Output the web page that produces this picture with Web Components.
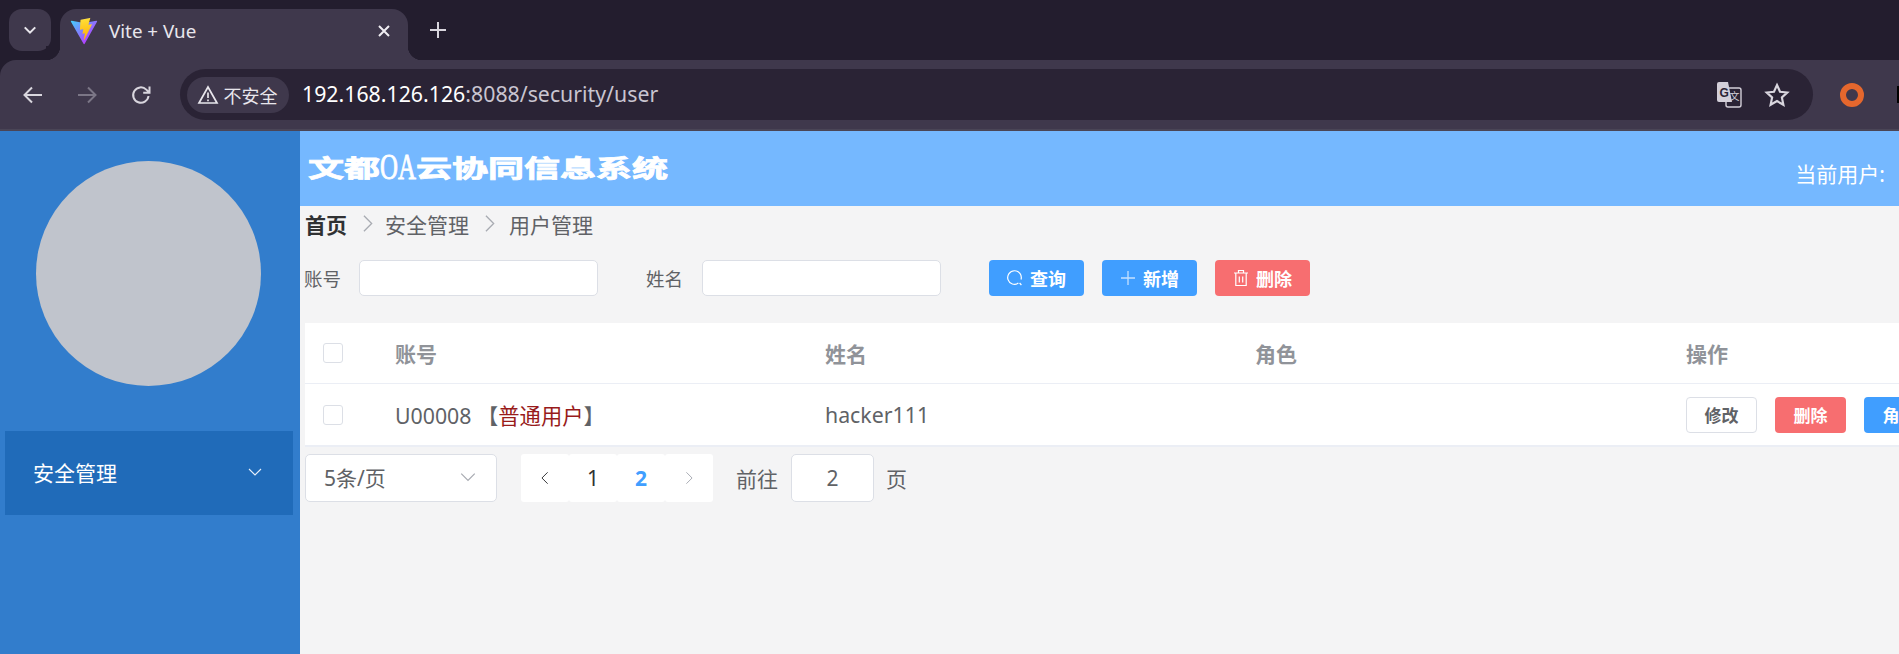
<!DOCTYPE html>
<html lang="zh">
<head>
<meta charset="utf-8">
<title>Vite + Vue</title>
<style>
/* Removes the default margin and padding on the page */
html, body { margin: 0; padding: 0; height: 654px; overflow: hidden; }
body {
    display: flex;
    flex-direction: column;
    font-family: "Noto Sans", "Noto Sans CJK SC", sans-serif;
    background: #f4f4f5;
}
</style>
</head>
<body>
<browser-frame></browser-frame>
<app-shell>
    <app-sidebar slot="side"></app-sidebar>
    <app-header></app-header>
    <bread-crumb></bread-crumb>
    <search-form></search-form>
    <user-table></user-table>
    <pager-bar></pager-bar>
</app-shell>

<script>
//! Small helper, every element clones its template into an open shadow root
function defineEl(name, html) {
    const tpl = document.createElement('template')
    tpl.innerHTML = html
    customElements.define(name, class extends HTMLElement {
        constructor() {
            super()
            this.attachShadow({ mode: 'open' })
            this.shadowRoot.appendChild(tpl.content.cloneNode(true))
        }
    })
}

const chevronDown = (s, c) => `<svg width="${s}" height="${s}" viewBox="0 0 16 16" fill="none" stroke="${c}" stroke-width="1.1"><path d="M2 5l6 6 6-6"/></svg>`
const chevronRight = (s, c) => `<svg width="${s}" height="${s}" viewBox="0 0 16 16" fill="none" stroke="${c}" stroke-width="1.1"><path d="M5 1.5l6.5 6.5L5 14.5"/></svg>`
const chevronLeft = (s, c) => `<svg width="${s}" height="${s}" viewBox="0 0 16 16" fill="none" stroke="${c}" stroke-width="1.1"><path d="M11 1.5L4.5 8l6.5 6.5"/></svg>`

//! BROWSER FRAME
defineEl('browser-frame', `
<style>
:host {
    display: block;
    flex: none;
    height: 131px;
    background: #231d2e;
    color: #e8e6ec;
}
.strip {
    height: 60px;
    display: flex;
    align-items: flex-start;
    padding: 9px 0 0 9px;
    box-sizing: border-box;
}
.switcher {
    width: 42px;
    height: 42px;
    border-radius: 13px;
    background: #3f384c;
    display: flex;
    align-items: center;
    justify-content: center;
}
.tab {
    position: relative;
    margin-left: 9px;
    width: 348px;
    height: 51px;
    background: #3f384c;
    border-radius: 16px 16px 0 0;
    display: flex;
    align-items: center;
    box-sizing: border-box;
    padding: 0 17px 8px 9px;
    font-size: 18.8px;
}
/* flared corners at the foot of the tab */
.tab::before, .tab::after {
    content: "";
    position: absolute;
    bottom: 0;
    width: 14px;
    height: 14px;
}
.tab::before { left: -14px; background: radial-gradient(circle at 0 0, #231d2e 14px, #3f384c 14.5px); }
.tab::after { right: -14px; background: radial-gradient(circle at 100% 0, #231d2e 14px, #3f384c 14.5px); }
.tab .name { flex: 1; margin-left: 10px; }
.plus { margin: 12px 0 0 21px; }
.toolbar {
    height: 69px;
    background: #3f384c;
    border-bottom: 2px solid #4a4556;
    border-radius: 16px 0 0 0;
    display: flex;
    align-items: center;
    padding-left: 21px;
}
.toolbar > * { flex: none; }
.nav { width: 24px; height: 24px; margin-right: 30px; }
.omni {
    margin-left: -3px;
    width: 1633px;
    height: 51px;
    border-radius: 26px;
    background: #2a2335;
    display: flex;
    align-items: center;
    box-sizing: border-box;
    padding-left: 7px;
}
.chip {
    width: 102px;
    height: 36px;
    border-radius: 18px;
    background: #3f384c;
    display: flex;
    align-items: center;
    justify-content: center;
    gap: 5px;
    padding-right: 2px;
    box-sizing: border-box;
    font-size: 18px;
    color: #e8e6ec;
}
.url { margin-left: 13px; padding-bottom: 3px; font-size: 21.3px; flex: 1; color: #c9c5d0; }
.url b { font-weight: 400; color: #fff; }
.omni-icons { display: flex; align-items: center; gap: 22px; padding-right: 23px; }
.ext { margin-left: 27px; }
.cut { margin-left: 33px; width: 8px; height: 17px; background: #000; }
</style>
<div class="strip">
    <div class="switcher">${chevronDown(14, '#e8e6ec').replace('stroke-width="1.1"', 'stroke-width="2.4"')}</div>
    <div class="tab">
        <svg width="30" height="30" viewBox="0 0 32 32">
            <defs>
                <linearGradient id="va" x1="2" y1="5" x2="22" y2="28" gradientUnits="userSpaceOnUse">
                    <stop offset="0" stop-color="#41D1FF"/><stop offset="1" stop-color="#BD34FE"/>
                </linearGradient>
                <linearGradient id="vb" x1="16" y1="2" x2="20" y2="27" gradientUnits="userSpaceOnUse">
                    <stop offset="0" stop-color="#FFEA83"/><stop offset=".08" stop-color="#FFDD35"/><stop offset="1" stop-color="#FFA800"/>
                </linearGradient>
            </defs>
            <path fill="url(#va)" d="M29.884 6.146 16.742 29.646a.714.714 0 0 1-1.244.005L2.096 6.148a.714.714 0 0 1 .746-1.057l13.156 2.352a.714.714 0 0 0 .253 0l12.881-2.348a.714.714 0 0 1 .752 1.05z"/>
            <path fill="url(#vb)" d="M22.264 2.007 12.54 3.912a.357.357 0 0 0-.288.33l-.598 10.104a.357.357 0 0 0 .437.369l2.707-.625a.357.357 0 0 1 .43.42l-.804 3.939a.357.357 0 0 0 .453.413l1.672-.508a.357.357 0 0 1 .453.414l-1.278 6.187c-.08.387.435.598.65.267l.143-.222 7.925-15.815a.357.357 0 0 0-.387-.51l-2.787.537a.357.357 0 0 1-.41-.45l1.818-6.306a.357.357 0 0 0-.412-.45z"/>
        </svg>
        <span class="name">Vite + Vue</span>
        <svg width="14" height="14" viewBox="0 0 14 14" stroke="#f0eef3" stroke-width="2"><path d="M2 2l10 10M12 2L2 12"/></svg>
    </div>
    <svg class="plus" width="18" height="18" viewBox="0 0 18 18" stroke="#d9d6de" stroke-width="2"><path d="M9 1v16M1 9h16"/></svg>
</div>
<div class="toolbar">
    <svg class="nav" viewBox="0 0 24 24" fill="none" stroke="#d9d6de" stroke-width="2"><path d="M21 12H4M11 4.5L3.5 12l7.5 7.5"/></svg>
    <svg class="nav" viewBox="0 0 24 24" fill="none" stroke="#7b7686" stroke-width="2"><path d="M3 12h17M13 4.5l7.5 7.5-7.5 7.5"/></svg>
    <svg class="nav" viewBox="0 0 24 24" fill="none" stroke="#d9d6de" stroke-width="2"><path d="M19.5 13a7.7 7.7 0 1 1-2.2-6.4L20 9.3M20.5 3.5v6.3h-6.3"/></svg>
    <div class="omni">
        <div class="chip">
            <svg width="22" height="20" viewBox="0 0 22 20" fill="none" stroke="#e8e6ec" stroke-width="1.7"><path d="M11 2L2 18h18zM11 7.5v5.5M11 14.500v1.700"/></svg>
            <span>不安全</span>
        </div>
        <div class="url"><b>192.168.126.126</b>:8088/security/user</div>
        <div class="omni-icons">
            <svg width="25" height="26" viewBox="0 0 25 26">
                <rect x="9" y="6" width="15" height="19" rx="2" fill="#2a2335" stroke="#d3cfd9" stroke-width="1.4"/>
                <path d="M2 0h9l4 20H2a2 2 0 0 1-2-2V2a2 2 0 0 1 2-2z" fill="#d3cfd9"/>
                <text x="2.5" y="15" font-size="12" font-weight="700" font-family="Liberation Sans" fill="#2a2335">G</text>
                <text x="12.5" y="18" font-size="10" font-family="Noto Sans CJK SC" fill="#d3cfd9">文</text>
            </svg>
            <svg width="26" height="26" viewBox="0 0 24 24" fill="none" stroke="#d9d6de" stroke-width="2"><path d="M12 2.8l2.8 6.2 6.7.7-5 4.600 1.400 6.700-5.900-3.400-5.900 3.400 1.400-6.700-5-4.600 6.700-.7z"/></svg>
        </div>
    </div>
    <svg class="ext" width="24" height="24" viewBox="0 0 24 24"><circle cx="12" cy="12" r="9" fill="none" stroke="#e5672d" stroke-width="6"/></svg>
    <div class="cut"></div>
</div>
`)

//! Page layout, sidebar on the left and the main column on the right
defineEl('app-shell', `
<style>
:host { display: flex; flex: 1; min-height: 0; }
main { flex: 1; min-width: 0; display: flex; flex-direction: column; overflow: hidden; }
</style>
<slot name="side"></slot>
<main><slot></slot></main>
`)

//! SIDEBAR
defineEl('app-sidebar', `
<style>
:host {
    display: block;
    flex: none;
    width: 300px;
    background: #327dcc;
    box-sizing: border-box;
    padding-top: 30px;
    color: #fff;
}
.avatar {
    width: 225px;
    height: 225px;
    border-radius: 50%;
    background: #c0c4cc;
    margin-left: 36px;
}
.menu {
    margin: 45px 7px 0 5px;
    height: 84px;
    box-sizing: border-box;
    background: #206bb9;
    display: flex;
    align-items: center;
    justify-content: space-between;
    padding: 0 30px 2px 28px;
    font-size: 21px;
}
</style>
<div class="avatar"></div>
<div class="menu"><span>安全管理</span>${chevronDown(16, '#e6effa')}</div>
`)

//! HEADER
defineEl('app-header', `
<style>
:host {
    display: flex;
    flex: none;
    height: 75px;
    background: #75b8ff;
    color: #fff;
    justify-content: space-between;
    padding: 0 14px 0 8px;
}
.title {
    margin-top: 22px;
    height: 28px;
    font-size: 24px;
    line-height: 28px;
    font-weight: 700;
    white-space: nowrap;
    font-family: "Noto Sans CJK SC", sans-serif;
    transform: scaleX(1.5);
    transform-origin: left center;
    -webkit-text-stroke: .8px #fff;
}
.oa {
    display: inline-block;
    width: 24px;
    height: 28px;
    font-family: "Liberation Serif", serif;
    font-weight: 400;
    font-size: 36px;
    line-height: 28px;
    vertical-align: top;
    transform: scaleX(.46);
    transform-origin: left center;
    -webkit-text-stroke: .9px #fff;
}
.user { margin-top: 29px; font-size: 21px; line-height: 28px; }
</style>
<div class="title">文都<span class="oa">OA</span>云协同信息系统</div>
<div class="user">当前用户:</div>
`)

//! BREADCRUMB
defineEl('bread-crumb', `
<style>
:host {
    display: flex;
    flex: none;
    align-items: center;
    height: 40px;
    padding: 0 0 5px 5px;
    box-sizing: border-box;
    font-size: 21px;
    color: #606266;
}
b { color: #303133; }
svg { margin: 0 10px 0 11px; }
svg:first-of-type { margin-right: 8px; }
</style>
<b>首页</b>${chevronRight(19, '#a8abb2')}<span>安全管理</span>${chevronRight(19, '#a8abb2')}<span>用户管理</span>
`)

//! BUTTON, the type attribute picks the colour
defineEl('el-btn', `
<style>
:host {
    display: inline-flex;
    flex: none;
    align-items: center;
    justify-content: center;
    gap: 7px;
    width: 95px;
    height: 36px;
    box-sizing: border-box;
    border-radius: 4px;
    font-size: 18px;
    font-weight: 700;
    color: #fff;
    background: #409eff;
}
:host([type="danger"]) { background: #f76e70; }
:host([type="plain"]) { background: #fff; color: #606266; border: 1px solid #dcdfe6; }
:host([size="small"]) { width: 71px; font-size: 17px; }
</style>
<slot name="icon"></slot><slot></slot>
`)

//! SEARCH FORM
defineEl('search-form', `
<style>
:host {
    display: flex;
    flex: none;
    align-items: center;
    margin-top: 14px;
    padding-left: 4px;
    height: 36px;
    font-size: 18.5px;
    color: #606266;
}
.input {
    width: 239px;
    height: 36px;
    box-sizing: border-box;
    margin-left: 18px;
    margin-right: 48px;
    background: #fff;
    border: 1.5px solid #dcdfe6;
    border-radius: 5px;
}
.second { margin-left: 19px; }
.btns { display: flex; gap: 18px; }
svg { display: block; }
</style>
<span>账号</span><div class="input"></div>
<span>姓名</span><div class="input second"></div>
<div class="btns">
    <el-btn>
        <svg slot="icon" width="16" height="16" viewBox="0 0 16 16" fill="none" stroke="#fff" stroke-width="1.2"><path d="M11.4 13.1A6.8 6.8 0 1 1 14 9.5M12.6 13l1.8 2"/></svg>
        查询
    </el-btn>
    <el-btn>
        <svg slot="icon" width="16" height="16" viewBox="0 0 16 16" fill="none" stroke="#c5e1ff" stroke-width="1.3"><path d="M8 1v14M1 8h14"/></svg>
        新增
    </el-btn>
    <el-btn type="danger">
        <svg slot="icon" width="16" height="18" viewBox="0 0 16 18" fill="none" stroke="#fff" stroke-width="1.2"><path d="M1 4h14M5.5 4V1.5h5V4M2.8 4v12.5h10.4V4M6.3 7.5v6M9.7 7.5v6"/></svg>
        删除
    </el-btn>
</div>
`)

//! USER TABLE
defineEl('user-table', `
<style>
:host {
    display: block;
    flex: none;
    margin: 27px 0 0 5px;
    background: #fff;
    font-size: 21.3px;
    color: #606266;
    overflow: hidden;
    border-bottom: 2px solid #ebeef5;
}
.row {
    display: grid;
    grid-template-columns: 90px 430px 430px 431px 1fr;
    align-items: center;
    height: 61px;
}
.head {
    height: 60px;
    font-weight: 700;
    font-size: 21px;
    color: #909399;
    border-bottom: 1px solid #ebeef5;
}
.check {
    width: 20px;
    height: 20px;
    margin-left: 18px;
    box-sizing: border-box;
    background: #fff;
    border: 1.5px solid #dcdfe6;
    border-radius: 3px;
}
.role { color: #981b1b; }
.ops { display: flex; gap: 18px; width: 260px; }
</style>
<div class="row head">
    <div class="check"></div><div>账号</div><div>姓名</div><div>角色</div><div>操作</div>
</div>
<div class="row">
    <div class="check"></div>
    <div>U00008 【<span class="role">普通用户</span>】</div>
    <div>hacker111</div>
    <div></div>
    <div class="ops">
        <el-btn type="plain" size="small">修改</el-btn>
        <el-btn type="danger" size="small">删除</el-btn>
        <el-btn size="small">角色</el-btn>
    </div>
</div>
`)

//! PAGINATION
defineEl('pager-bar', `
<style>
:host {
    display: flex;
    flex: none;
    align-items: center;
    margin: 7px 0 0 5px;
    height: 48px;
    font-size: 21px;
    color: #606266;
}
.select {
    width: 192px;
    height: 48px;
    box-sizing: border-box;
    background: #fff;
    border: 1.5px solid #dcdfe6;
    border-radius: 5px;
    display: flex;
    align-items: center;
    justify-content: space-between;
    padding: 0 19px 2px 18px;
}
.pages { display: flex; margin-left: 24px; margin-right: 23px; }
.pages div {
    width: 48px;
    height: 48px;
    background: #fff;
    border-radius: 3px;
    display: flex;
    align-items: center;
    justify-content: center;
    color: #303133;
}
.pages .on { color: #409eff; font-weight: 700; }
.jump {
    width: 83px;
    height: 48px;
    box-sizing: border-box;
    margin: 0 12px 0 13px;
    background: #fff;
    border: 1.5px solid #dcdfe6;
    border-radius: 5px;
    display: flex;
    align-items: center;
    justify-content: center;
}
</style>
<div class="select"><span>5条/页</span>${chevronDown(18, '#a8abb2')}</div>
<div class="pages">
    <div>${chevronLeft(14, '#303133')}</div>
    <div>1</div>
    <div class="on">2</div>
    <div>${chevronRight(14, '#a8abb2')}</div>
</div>
<span>前往</span><div class="jump">2</div><span>页</span>
`)
</script>
</body>
</html>
